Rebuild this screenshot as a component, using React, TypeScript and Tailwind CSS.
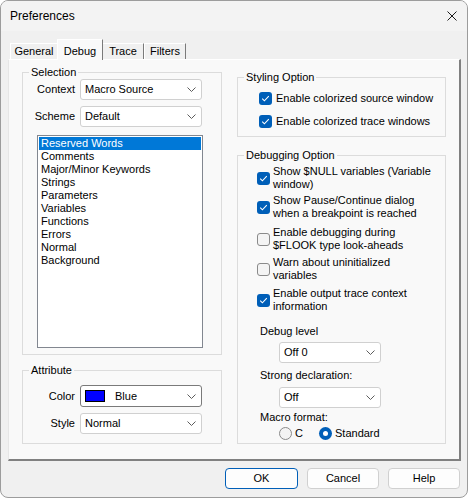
import React from "react";

function Chevron() {
  return (
    <svg width="9" height="5" viewBox="0 0 9 5" className="shrink-0">
      <path d="M0.5 0.5 L4.5 4.5 L8.5 0.5" fill="none" stroke="#5c5c5c" strokeWidth="1" />
    </svg>
  );
}

function Select({ children, className, focused }: { children: React.ReactNode; className: string; focused?: boolean }) {
  return (
    <div
      className={`flex items-center justify-between rounded-[3px] border bg-white pl-[4px] pr-[5px] ${
        focused ? "border-[#7a7a7a]" : "border-[#d0d0d0]"
      } ${className}`}
    >
      <div className="flex items-center whitespace-nowrap">{children}</div>
      <Chevron />
    </div>
  );
}

function Check({ checked }: { checked: boolean }) {
  return checked ? (
    <div className="flex h-[13px] w-[13px] shrink-0 items-center justify-center rounded-[3px] bg-[#005fb8]">
      <svg width="9" height="7" viewBox="0 0 9 7">
        <path d="M1.2 3.6 L3.4 5.8 L7.8 1.2" stroke="#ffffff" strokeWidth="1.1" fill="none" />
      </svg>
    </div>
  ) : (
    <div className="h-[13px] w-[13px] shrink-0 rounded-[3px] border border-[#8a8a8a] bg-[#f4f4f4]" />
  );
}

function Group({ label, className, children }: { label: string; className: string; children?: React.ReactNode }) {
  return (
    <div className={`relative border border-[#dcdcdc] ${className}`}>
      <span className="absolute left-[6px] top-[-8px] bg-[#f9f9f9] px-[2px] leading-[14px]">{label}</span>
      {children}
    </div>
  );
}

function DebugItem({ checked, lines, className }: { checked: boolean; lines: string[]; className: string }) {
  return (
    <div className={`flex h-[26px] items-center gap-[3px] pl-[19px] ${className}`}>
      <Check checked={checked} />
      <div className="whitespace-nowrap leading-[13px]">
        {lines[0]}
        <br />
        {lines[1]}
      </div>
    </div>
  );
}

export default function App() {
  const items = [
    "Reserved Words",
    "Comments",
    "Major/Minor Keywords",
    "Strings",
    "Parameters",
    "Variables",
    "Functions",
    "Errors",
    "Normal",
    "Background",
  ];
  return (
    <div className="h-[498px] w-[468px] bg-white font-['Liberation_Sans',Arial,sans-serif] text-[11px] text-black">
      <div className="flex h-full w-full flex-col overflow-hidden rounded-[8px] border border-[#9c9c9c] bg-[#f0f0f0]">
        {/* Title bar */}
        <div className="flex h-[30px] shrink-0 items-center justify-between bg-[#f3f3f3] pl-[9px] pr-[10px]">
          <span className="text-[12px]">Preferences</span>
          <svg width="10" height="10" viewBox="0 0 10 10">
            <path d="M0.5 0.5 L9.5 9.5 M9.5 0.5 L0.5 9.5" stroke="#1a1a1a" strokeWidth="1" />
          </svg>
        </div>

        {/* Body */}
        <div className="flex flex-1 flex-col px-[7px] pt-[8px]">
          {/* Tabs */}
          <div className="flex h-[20px] items-end pl-[2px]">
            <div className="flex h-[16px] w-[47px] items-center justify-center border-l border-t border-white bg-[#f0f0f0] pb-[1px]">
              General
            </div>
            <div className="relative z-10 mb-[-1px] flex h-[21px] w-[46px] items-center justify-center border-l border-r border-t border-l-white border-r-[#7a7a7a] border-t-white bg-[#f9f9f9] pt-[2px]">
              Debug
            </div>
            <div className="flex h-[16px] w-[41px] items-center justify-center border-r border-t border-r-[#7a7a7a] border-t-white bg-[#f0f0f0] pb-[1px]">
              Trace
            </div>
            <div className="flex h-[16px] w-[42px] items-center justify-center border-l border-r border-t border-l-white border-r-[#7a7a7a] border-t-white bg-[#f0f0f0] pb-[1px]">
              Filters
            </div>
          </div>

          {/* Panel */}
          <div className="flex h-[402px] w-[453px] gap-[15px] border-b-2 border-l border-r-2 border-t border-b-[#808080] border-l-[#e6e6e6] border-r-[#808080] border-t-[#ffffff] bg-[#f9f9f9] pl-[13px]">
            {/* Left column */}
            <div className="flex w-[200px] flex-col pt-[12px]">
              <Group label="Selection" className="h-[283px] pt-[6px]">
                <div className="flex h-[21px] items-center">
                  <span className="w-[52px] text-right">Context</span>
                  <Select className="ml-[5px] h-[21px] w-[122px]">Macro Source</Select>
                </div>
                <div className="mt-[6px] flex h-[21px] items-center">
                  <span className="w-[52px] text-right">Scheme</span>
                  <Select className="ml-[5px] h-[21px] w-[122px]">Default</Select>
                </div>
                <div className="ml-[14px] mt-[8px] h-[213px] w-[166px] border border-[#828790] bg-white p-[1px]">
                  {items.map((it, i) => (
                    <div
                      key={it}
                      className={`h-[13px] pl-[2px] leading-[13px] ${i === 0 ? "bg-[#0078d7] text-white" : ""}`}
                    >
                      {it}
                    </div>
                  ))}
                </div>
              </Group>
              <Group label="Attribute" className="mt-[15px] h-[74px] pt-[14px]">
                <div className="flex h-[22px] items-center">
                  <span className="w-[52px] text-right">Color</span>
                  <Select focused className="ml-[5px] h-[22px] w-[122px]">
                    <div className="h-[12px] w-[20px] border border-black bg-[#0000ff]" />
                    <span className="ml-[10px]">Blue</span>
                  </Select>
                </div>
                <div className="mt-[6px] flex h-[21px] items-center">
                  <span className="w-[52px] text-right">Style</span>
                  <Select className="ml-[5px] h-[21px] w-[122px]">Normal</Select>
                </div>
              </Group>
            </div>

            {/* Right column */}
            <div className="flex w-[209px] flex-col pt-[17px]">
              <Group label="Styling Option" className="h-[60px] pt-[14px]">
                <div className="flex h-[13px] items-center gap-[4px] pl-[21px]">
                  <Check checked />
                  <span className="whitespace-nowrap leading-[13px]">Enable colorized source window</span>
                </div>
                <div className="mt-[10px] flex h-[13px] items-center gap-[4px] pl-[21px]">
                  <Check checked />
                  <span className="whitespace-nowrap leading-[13px]">Enable colorized trace windows</span>
                </div>
              </Group>
              <Group label="Debugging Option" className="mt-[18px] h-[289px] pt-[9px]">
                <DebugItem checked lines={["Show $NULL variables (Variable", "window)"]} className="" />
                <DebugItem checked lines={["Show Pause/Continue dialog", "when a breakpoint is reached"]} className="mt-[3px]" />
                <DebugItem checked={false} lines={["Enable debugging during", "$FLOOK type look-aheads"]} className="mt-[6px]" />
                <DebugItem checked={false} lines={["Warn about uninitialized", "variables"]} className="mt-[4px]" />
                <DebugItem checked lines={["Enable output trace context", "information"]} className="mt-[5px]" />

                <div className="mt-[12px] pl-[22px] leading-[13px]">Debug level</div>
                <div className="mt-[4px] pl-[41px]">
                  <Select className="h-[21px] w-[102px]">Off 0</Select>
                </div>
                <div className="mt-[6px] pl-[22px] leading-[13px]">Strong declaration:</div>
                <div className="mt-[5px] pl-[41px]">
                  <Select className="h-[21px] w-[102px]">Off</Select>
                </div>
                <div className="mt-[3px] pl-[22px] leading-[13px]">Macro format:</div>
                <div className="mt-[3px] flex h-[13px] items-center pl-[41px]">
                  <div className="flex w-[40px] items-center gap-[3px]">
                    <div className="h-[13px] w-[13px] rounded-full border border-[#8a8a8a] bg-[#f4f4f4]" />
                    <span className="leading-[13px]">C</span>
                  </div>
                  <div className="flex items-center gap-[3px]">
                    <div className="flex h-[13px] w-[13px] items-center justify-center rounded-full bg-[#005fb8]">
                      <div className="h-[5px] w-[5px] rounded-full bg-white" />
                    </div>
                    <span className="leading-[13px]">Standard</span>
                  </div>
                </div>
              </Group>
            </div>
          </div>

          {/* Buttons */}
          <div className="mt-[7px] flex justify-end gap-[9px]">
            <button className="flex h-[21px] w-[73px] items-center justify-center rounded-[4px] border border-[#005fb8] bg-[#fdfdfd]">
              OK
            </button>
            <button className="flex h-[21px] w-[72px] items-center justify-center rounded-[4px] border border-[#d0d0d0] bg-[#fdfdfd]">
              Cancel
            </button>
            <button className="flex h-[21px] w-[72px] items-center justify-center rounded-[4px] border border-[#d0d0d0] bg-[#fdfdfd]">
              Help
            </button>
          </div>
        </div>
      </div>
    </div>
  );
}
